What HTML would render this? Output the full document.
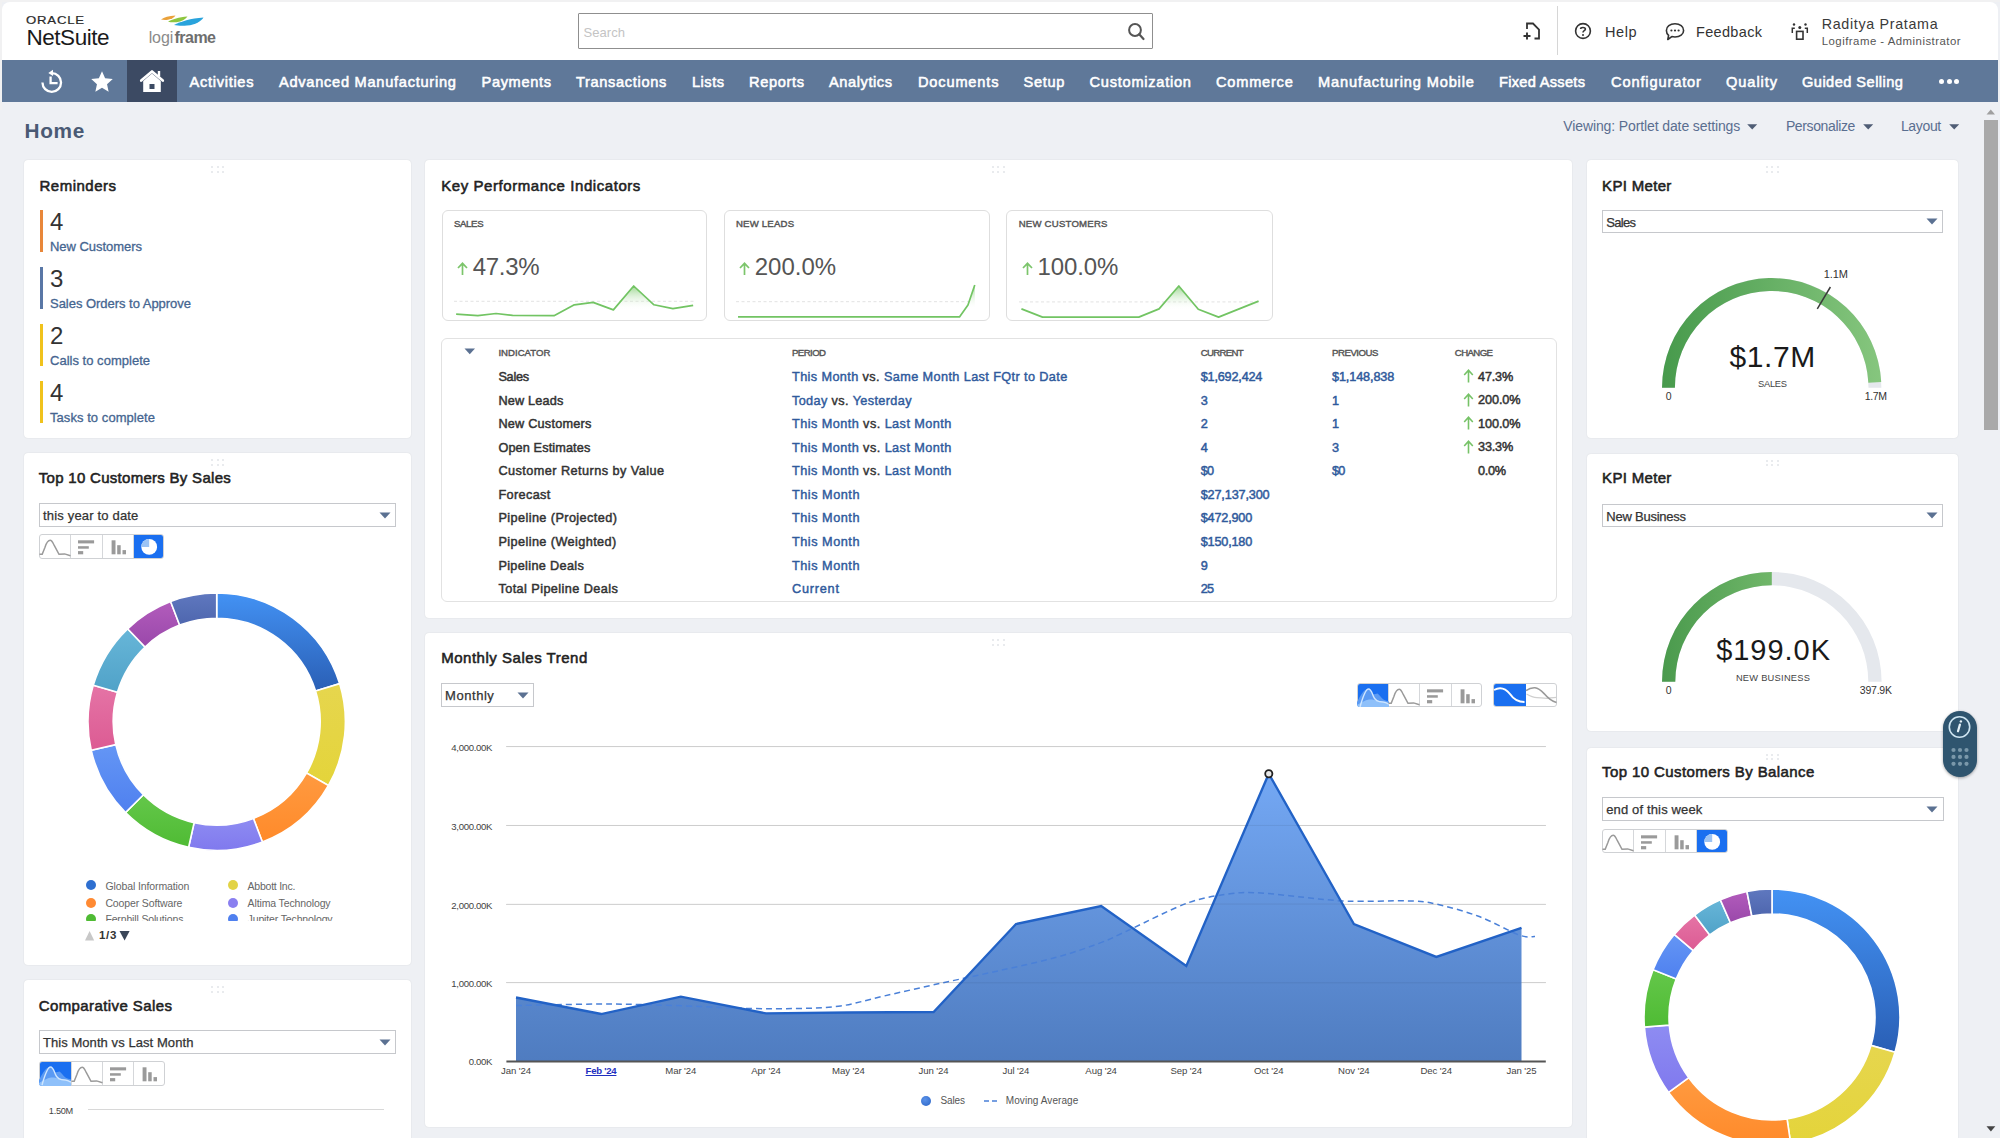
<!DOCTYPE html>
<html><head><meta charset="utf-8"><title>NetSuite Home</title>
<style>
*{margin:0;padding:0;box-sizing:border-box}
html,body{width:2000px;height:1138px;overflow:hidden;background:#eef0f4;font-family:"Liberation Sans",sans-serif;color:#222}
.abs{position:absolute}
.t{position:absolute;white-space:nowrap}

</style></head>
<body>
<div class="abs" style="left:0;top:0;width:2000px;height:1138px;background:#eef0f4;overflow:hidden">
<div class="abs" style="left:0;top:0;width:2000px;height:2px;background:#f1f1f2"></div><div class="abs" style="left:0;top:0;width:2px;height:110px;background:#f1f1f2"></div>
<div class="abs" style="left:2px;top:2px;width:1996px;height:58px;background:#fff;border-radius:8px 8px 0 0"></div>
<div class="t" style="left:26px;top:14.6px;font-size:10.8px;line-height:11px;color:#2a2a2a;transform:scaleX(1.22);transform-origin:0 0;letter-spacing:0.65px;-webkit-text-stroke:0.2px #2a2a2a">ORACLE</div>
<div class="t" style="left:26.50px;top:27.01px;font-size:22.5px;line-height:22.5px;color:#1a1a1a;letter-spacing:-0.470px;">NetSuite</div>
<div class="t" style="left:148.70px;top:29.71px;font-size:16px;line-height:16px;color:#8a8a8a;letter-spacing:-0.127px;">logi</div>
<div class="t" style="left:174.50px;top:29.71px;font-size:16px;line-height:16px;color:#6e6e6e;font-weight:bold;letter-spacing:-0.525px;">frame</div>
<svg class="abs" style="left:158px;top:12px" width="50" height="18" viewBox="0 0 50 18">
<path d="M3 7.6 C6 5.5,11 4,17.5 3.6 C16 5.6,13.5 7.3,10 7.8 C7.5 8.1,5 8,3 7.6Z" fill="#eaa13a"/>
<path d="M10 9.8 C14 7.4,21 5.2,29.5 4.6 C27.5 7.6,23.5 9.6,18.5 10.2 C15.5 10.5,12.5 10.3,10 9.8Z" fill="#8dc63f"/>
<path d="M16 13 C22 9.6,33 6.2,45.5 5.4 C43 9.2,37.5 12.6,29 13.6 C24 14.1,19.5 13.8,16 13Z" fill="#29a3dc"/>
</svg>
<div class="abs" style="left:578px;top:13px;width:575px;height:36px;border:1.6px solid #8f8f8f;border-radius:1px;background:#fff"></div>
<div class="t" style="left:583.50px;top:25.70px;font-size:13px;line-height:13px;color:#c4c4c4;letter-spacing:0.058px;">Search</div>
<svg class="abs" style="left:1125px;top:20px" width="24" height="24" viewBox="0 0 24 24">
<circle cx="10" cy="10" r="5.9" fill="none" stroke="#555" stroke-width="2"/>
<line x1="14.2" y1="14.2" x2="18.5" y2="19" stroke="#555" stroke-width="2.2" stroke-linecap="round"/></svg>
<svg class="abs" style="left:1520px;top:20px" width="24" height="24" viewBox="0 0 24 24">
<path d="M7 9 V3.5 H13 L19 9.5 V18.5 H14.5" fill="none" stroke="#333" stroke-width="1.8"/>
<path d="M3.5 16 H10.5 M7 12.5 V19.5" stroke="#333" stroke-width="1.9"/></svg>
<div class="abs" style="left:1557px;top:6px;width:1px;height:49px;background:#d6d6d6"></div>
<svg class="abs" style="left:1573px;top:21px" width="20" height="20" viewBox="0 0 20 20">
<circle cx="10" cy="10" r="7.4" fill="none" stroke="#333" stroke-width="1.6"/>
<path d="M7.6 8 C7.6 5.9,12.4 5.9,12.4 8 C12.4 9.6,10 9.6,10 11.4" fill="none" stroke="#333" stroke-width="1.6"/>
<circle cx="10" cy="13.9" r="1" fill="#333"/></svg>
<div class="t" style="left:1605.00px;top:25.46px;font-size:14.5px;line-height:14.5px;color:#333;letter-spacing:0.568px;">Help</div>
<svg class="abs" style="left:1664px;top:21px" width="22" height="22" viewBox="0 0 22 22">
<path d="M11 2.8 C16 2.8,19.6 5.6,19.6 9.4 C19.6 13.2,16 16,11 16 C9.8 16,8.8 15.9,7.8 15.6 L3.8 18.5 L4.6 14.3 C3.1 13,2.4 11.3,2.4 9.4 C2.4 5.6,6 2.8,11 2.8Z" fill="none" stroke="#333" stroke-width="1.6" stroke-linejoin="round"/>
<circle cx="7.4" cy="9.5" r="1.1" fill="#333"/><circle cx="11" cy="9.5" r="1.1" fill="#333"/><circle cx="14.6" cy="9.5" r="1.1" fill="#333"/></svg>
<div class="t" style="left:1696.00px;top:25.46px;font-size:14.5px;line-height:14.5px;color:#333;letter-spacing:0.325px;">Feedback</div>
<svg class="abs" style="left:1788px;top:20px" width="24" height="24" viewBox="0 0 24 24">
<circle cx="6" cy="4.5" r="1.2" fill="#333"/><circle cx="17.5" cy="4.5" r="1.2" fill="#333"/><circle cx="11.8" cy="7.5" r="1.5" fill="#333"/>
<path d="M4.3 13 V8.2 H6.8 M19.3 13 V8.2 H16.8" fill="none" stroke="#333" stroke-width="1.5"/>
<rect x="8.6" y="11.4" width="6.4" height="7.8" fill="none" stroke="#333" stroke-width="1.6"/></svg>
<div class="t" style="left:1821.70px;top:17.12px;font-size:14.3px;line-height:14.3px;color:#3a3a3a;letter-spacing:0.676px;">Raditya Pratama</div>
<div class="t" style="left:1821.70px;top:36.23px;font-size:11.4px;line-height:11.4px;color:#555;letter-spacing:0.486px;">Logiframe - Administrator</div>
<div class="abs" style="left:2px;top:60px;width:1996px;height:42px;background:#5f7899"></div>
<div class="abs" style="left:127px;top:60px;width:50px;height:42px;background:#3c4a63"></div>
<div class="t" style="left:189.60px;top:75.37px;font-size:14.6px;line-height:14.6px;color:#ffffff;-webkit-text-stroke:0.55px #ffffff;letter-spacing:0.700px;">Activities</div>
<div class="t" style="left:279.00px;top:75.37px;font-size:14.6px;line-height:14.6px;color:#ffffff;-webkit-text-stroke:0.55px #ffffff;letter-spacing:0.736px;">Advanced Manufacturing</div>
<div class="t" style="left:481.50px;top:75.37px;font-size:14.6px;line-height:14.6px;color:#ffffff;-webkit-text-stroke:0.55px #ffffff;letter-spacing:0.658px;">Payments</div>
<div class="t" style="left:576.00px;top:75.37px;font-size:14.6px;line-height:14.6px;color:#ffffff;-webkit-text-stroke:0.55px #ffffff;letter-spacing:0.657px;">Transactions</div>
<div class="t" style="left:692.00px;top:75.37px;font-size:14.6px;line-height:14.6px;color:#ffffff;-webkit-text-stroke:0.55px #ffffff;letter-spacing:0.499px;">Lists</div>
<div class="t" style="left:749.00px;top:75.37px;font-size:14.6px;line-height:14.6px;color:#ffffff;-webkit-text-stroke:0.55px #ffffff;letter-spacing:0.650px;">Reports</div>
<div class="t" style="left:829.00px;top:75.37px;font-size:14.6px;line-height:14.6px;color:#ffffff;-webkit-text-stroke:0.55px #ffffff;letter-spacing:0.575px;">Analytics</div>
<div class="t" style="left:918.00px;top:75.37px;font-size:14.6px;line-height:14.6px;color:#ffffff;-webkit-text-stroke:0.55px #ffffff;letter-spacing:0.828px;">Documents</div>
<div class="t" style="left:1023.50px;top:75.37px;font-size:14.6px;line-height:14.6px;color:#ffffff;-webkit-text-stroke:0.55px #ffffff;letter-spacing:0.705px;">Setup</div>
<div class="t" style="left:1089.50px;top:75.37px;font-size:14.6px;line-height:14.6px;color:#ffffff;-webkit-text-stroke:0.55px #ffffff;letter-spacing:0.751px;">Customization</div>
<div class="t" style="left:1216.00px;top:75.37px;font-size:14.6px;line-height:14.6px;color:#ffffff;-webkit-text-stroke:0.55px #ffffff;letter-spacing:0.772px;">Commerce</div>
<div class="t" style="left:1318.00px;top:75.37px;font-size:14.6px;line-height:14.6px;color:#ffffff;-webkit-text-stroke:0.55px #ffffff;letter-spacing:0.864px;">Manufacturing Mobile</div>
<div class="t" style="left:1499.00px;top:75.37px;font-size:14.6px;line-height:14.6px;color:#ffffff;-webkit-text-stroke:0.55px #ffffff;letter-spacing:0.293px;">Fixed Assets</div>
<div class="t" style="left:1611.00px;top:75.37px;font-size:14.6px;line-height:14.6px;color:#ffffff;-webkit-text-stroke:0.55px #ffffff;letter-spacing:0.875px;">Configurator</div>
<div class="t" style="left:1726.00px;top:75.37px;font-size:14.6px;line-height:14.6px;color:#ffffff;-webkit-text-stroke:0.55px #ffffff;letter-spacing:0.932px;">Quality</div>
<div class="t" style="left:1802.00px;top:75.37px;font-size:14.6px;line-height:14.6px;color:#ffffff;-webkit-text-stroke:0.55px #ffffff;letter-spacing:0.464px;">Guided Selling</div>
<div class="abs" style="left:1939.0px;top:78.5px;width:5px;height:5px;border-radius:50%;background:#fff"></div>
<div class="abs" style="left:1946.5px;top:78.5px;width:5px;height:5px;border-radius:50%;background:#fff"></div>
<div class="abs" style="left:1954.0px;top:78.5px;width:5px;height:5px;border-radius:50%;background:#fff"></div>
<svg class="abs" style="left:38px;top:68px" width="28" height="28" viewBox="0 0 28 28">
<path d="M13.75 5.2 A9.3 9.3 0 1 1 4.45 14.5" fill="none" stroke="#fff" stroke-width="2.3"/>
<path d="M10.3 4.9 L15 1.8 L15 8Z" fill="#fff"/>
<path d="M12.6 8.5 V15.2 H19.6" fill="none" stroke="#fff" stroke-width="2.3"/></svg>
<svg class="abs" style="left:90px;top:70px" width="24" height="23" viewBox="0 0 24 23">
<path d="M12.00 1.20 L15.12 8.21 L22.75 9.01 L17.04 14.14 L18.64 21.64 L12.00 17.80 L5.36 21.64 L6.96 14.14 L1.25 9.01 L8.88 8.21Z" fill="#fff"/></svg>
<svg class="abs" style="left:138px;top:69px" width="28" height="25" viewBox="0 0 28 25">
<path d="M3.2 11.6 L14 2.4 L24.8 11.6" fill="none" stroke="#fff" stroke-width="2.6" stroke-linecap="round" stroke-linejoin="round"/>
<rect x="19.8" y="2" width="2.4" height="5.5" fill="#fff"/>
<path d="M5.2 12 L14 4.6 L22.8 12 V23 H5.2Z" fill="#fff"/>
<rect x="11.5" y="15" width="5" height="5" fill="#3c4a63"/></svg>
<div class="t" style="left:24.60px;top:121.13px;font-size:20.8px;line-height:20.8px;color:#4a5a74;font-weight:bold;letter-spacing:0.625px;">Home</div>
<div class="t" style="left:1563.30px;top:119.37px;font-size:14px;line-height:14px;color:#5a6e90;letter-spacing:-0.114px;">Viewing: Portlet date settings</div>
<svg class="abs" style="left:1747.4px;top:124.4px" width="11" height="6" viewBox="0 0 11 6"><path d="M0.2 0.2 H10.2 L5.2 5.4Z" fill="#4f5d75"/></svg>
<div class="t" style="left:1785.90px;top:119.37px;font-size:14px;line-height:14px;color:#5a6e90;letter-spacing:-0.375px;">Personalize</div>
<svg class="abs" style="left:1862.8px;top:124.4px" width="11" height="6" viewBox="0 0 11 6"><path d="M0.2 0.2 H10.2 L5.2 5.4Z" fill="#4f5d75"/></svg>
<div class="t" style="left:1900.90px;top:119.37px;font-size:14px;line-height:14px;color:#5a6e90;letter-spacing:-0.334px;">Layout</div>
<svg class="abs" style="left:1949.3px;top:124.4px" width="11" height="6" viewBox="0 0 11 6"><path d="M0.2 0.2 H10.2 L5.2 5.4Z" fill="#4f5d75"/></svg>
<div class="abs" style="left:24px;top:160px;width:387px;height:278px;background:#fff;border-radius:4px;box-shadow:0 0 1.5px rgba(0,0,0,0.12)"></div><div class="abs" style="left:211.0px;top:166.0px;width:2px;height:2px;background:#e9ebee"></div><div class="abs" style="left:216.5px;top:166.0px;width:2px;height:2px;background:#e9ebee"></div><div class="abs" style="left:222.0px;top:166.0px;width:2px;height:2px;background:#e9ebee"></div><div class="abs" style="left:211.0px;top:170.5px;width:2px;height:2px;background:#e9ebee"></div><div class="abs" style="left:216.5px;top:170.5px;width:2px;height:2px;background:#e9ebee"></div><div class="abs" style="left:222.0px;top:170.5px;width:2px;height:2px;background:#e9ebee"></div>
<div class="t" style="left:39.50px;top:177.84px;font-size:15px;line-height:15px;color:#222;-webkit-text-stroke:0.55px #222;letter-spacing:0.497px;">Reminders</div>
<div class="abs" style="left:39.5px;top:210px;width:3.2px;height:42px;background:#e8873a"></div>
<div class="t" style="left:50.00px;top:210.27px;font-size:24px;line-height:24px;color:#333;">4</div>
<div class="t" style="left:50.00px;top:240.40px;font-size:13px;line-height:13px;color:#456590;letter-spacing:-0.041px;-webkit-text-stroke:0.3px #456590;">New Customers</div>
<div class="abs" style="left:39.5px;top:267px;width:3.2px;height:42px;background:#5977a6"></div>
<div class="t" style="left:50.00px;top:267.27px;font-size:24px;line-height:24px;color:#333;">3</div>
<div class="t" style="left:50.00px;top:297.40px;font-size:13px;line-height:13px;color:#456590;letter-spacing:-0.029px;-webkit-text-stroke:0.3px #456590;">Sales Orders to Approve</div>
<div class="abs" style="left:39.5px;top:324px;width:3.2px;height:42px;background:#f0c21c"></div>
<div class="t" style="left:50.00px;top:324.27px;font-size:24px;line-height:24px;color:#333;">2</div>
<div class="t" style="left:50.00px;top:354.40px;font-size:13px;line-height:13px;color:#456590;letter-spacing:0.018px;-webkit-text-stroke:0.3px #456590;">Calls to complete</div>
<div class="abs" style="left:39.5px;top:381px;width:3.2px;height:42px;background:#f0c21c"></div>
<div class="t" style="left:50.00px;top:381.27px;font-size:24px;line-height:24px;color:#333;">4</div>
<div class="t" style="left:50.00px;top:411.40px;font-size:13px;line-height:13px;color:#456590;letter-spacing:0.058px;-webkit-text-stroke:0.3px #456590;">Tasks to complete</div>
<div class="abs" style="left:24px;top:453px;width:387px;height:512px;background:#fff;border-radius:4px;box-shadow:0 0 1.5px rgba(0,0,0,0.12)"></div><div class="abs" style="left:211.0px;top:459.0px;width:2px;height:2px;background:#e9ebee"></div><div class="abs" style="left:216.5px;top:459.0px;width:2px;height:2px;background:#e9ebee"></div><div class="abs" style="left:222.0px;top:459.0px;width:2px;height:2px;background:#e9ebee"></div><div class="abs" style="left:211.0px;top:463.5px;width:2px;height:2px;background:#e9ebee"></div><div class="abs" style="left:216.5px;top:463.5px;width:2px;height:2px;background:#e9ebee"></div><div class="abs" style="left:222.0px;top:463.5px;width:2px;height:2px;background:#e9ebee"></div>
<div class="t" style="left:38.80px;top:470.44px;font-size:15px;line-height:15px;color:#222;-webkit-text-stroke:0.55px #222;letter-spacing:0.288px;">Top 10 Customers By Sales</div>
<div class="abs" style="left:38.8px;top:503px;width:357.2px;height:24px;border:1px solid #c6c8cc;background:#fff"></div><div class="t" style="left:43.00px;top:509.20px;font-size:13px;line-height:13px;color:#333;letter-spacing:0.175px;-webkit-text-stroke:0.25px #333;">this year to date</div><svg class="abs" style="left:378.5px;top:511.7px" width="12" height="7" viewBox="0 0 12 7"><path d="M0.5 0.5 H11.5 L6 6.5Z" fill="#5b7192"/></svg>
<div class="abs" style="left:39.2px;top:534.2px;width:124.8px;height:25px;border:1px solid #cfd1d4;border-radius:3px;background:#fff;overflow:hidden"><div class="abs" style="left:30.2px;top:0;width:1px;height:23px;background:#d5d7da"></div><div class="abs" style="left:61.4px;top:0;width:1px;height:23px;background:#d5d7da"></div><div class="abs" style="left:92.6px;top:-1px;width:32.2px;height:25px;background:#1a6ff0"></div><div class="abs" style="left:92.6px;top:0;width:1px;height:23px;background:#d5d7da"></div></div><div class="abs" style="left:39.2px;top:534.2px;width:124.8px;height:25px;overflow:hidden;border-radius:3px"><svg class="abs" style="left:0.0px;top:0px" width="32" height="25" viewBox="0 0 32 25"><path d="M0.5 20.3 H3.2 L6 13.3 C8 7,9.5 6.3,11.2 6.3 C13 6.3,14 9,15.1 11.2 L20 20.3 L25.6 19.9 L31.5 21.7" fill="none" stroke="#9a9a9a" stroke-width="1.5"/></svg><svg class="abs" style="left:31.2px;top:0px" width="32" height="25" viewBox="0 0 32 25"><rect x="8" y="6.3" width="16.1" height="3.1" fill="#9a9a9a"/><rect x="8" y="12.2" width="10.8" height="2.5" fill="#9a9a9a"/><rect x="8" y="17.1" width="5.2" height="3.2" fill="#9a9a9a"/></svg><svg class="abs" style="left:62.4px;top:0px" width="32" height="25" viewBox="0 0 32 25"><rect x="9.6" y="6.3" width="3.9" height="14" fill="#9a9a9a"/><rect x="15.2" y="11.2" width="3.5" height="9.1" fill="#9a9a9a"/><rect x="20.5" y="16.1" width="3.5" height="4.2" fill="#9a9a9a"/></svg><svg class="abs" style="left:93.6px;top:0px" width="32" height="25" viewBox="0 0 32 25"><circle cx="16.2" cy="12.9" r="7.9" fill="#fff"/><path d="M16.2 12.9 H8.3 A7.9 7.9 0 0 1 16.2 5Z" fill="#9cc3f4"/></svg></div>
<svg class="abs" style="left:85.80px;top:591.30px" width="261.4" height="261.4" viewBox="0 0 261.4 261.4"><defs><linearGradient id="g216_722_0" x1="0" y1="0" x2="0" y2="1"><stop offset="0" stop-color="#4392f4"/><stop offset="1" stop-color="#2a5fb5"/></linearGradient><linearGradient id="g216_722_1" x1="0" y1="0" x2="0" y2="1"><stop offset="0" stop-color="#e6d64e"/><stop offset="1" stop-color="#e4d43a"/></linearGradient><linearGradient id="g216_722_2" x1="0" y1="0" x2="0" y2="1"><stop offset="0" stop-color="#ff9a40"/><stop offset="1" stop-color="#ff8a2a"/></linearGradient><linearGradient id="g216_722_3" x1="0" y1="0" x2="0" y2="1"><stop offset="0" stop-color="#8e8cf2"/><stop offset="1" stop-color="#8079ee"/></linearGradient><linearGradient id="g216_722_4" x1="0" y1="0" x2="0" y2="1"><stop offset="0" stop-color="#64c74a"/><stop offset="1" stop-color="#4fbb34"/></linearGradient><linearGradient id="g216_722_5" x1="0" y1="0" x2="0" y2="1"><stop offset="0" stop-color="#6496f5"/><stop offset="1" stop-color="#4f80ef"/></linearGradient><linearGradient id="g216_722_6" x1="0" y1="0" x2="0" y2="1"><stop offset="0" stop-color="#e574a6"/><stop offset="1" stop-color="#dc5b93"/></linearGradient><linearGradient id="g216_722_7" x1="0" y1="0" x2="0" y2="1"><stop offset="0" stop-color="#67b6d8"/><stop offset="1" stop-color="#50a2c8"/></linearGradient><linearGradient id="g216_722_8" x1="0" y1="0" x2="0" y2="1"><stop offset="0" stop-color="#b25cbc"/><stop offset="1" stop-color="#9a48aa"/></linearGradient><linearGradient id="g216_722_9" x1="0" y1="0" x2="0" y2="1"><stop offset="0" stop-color="#5f78bf"/><stop offset="1" stop-color="#4e66ae"/></linearGradient></defs><path d="M130.70 2.00 A128.7 128.7 0 0 1 253.64 92.64 L229.57 100.09 A103.5 103.5 0 0 0 130.70 27.20Z" fill="url(#g216_722_0)" stroke="#fff" stroke-width="1.6" stroke-linejoin="miter"/><path d="M253.64 92.64 A128.7 128.7 0 0 1 242.49 194.47 L220.60 181.98 A103.5 103.5 0 0 0 229.57 100.09Z" fill="url(#g216_722_1)" stroke="#fff" stroke-width="1.6" stroke-linejoin="miter"/><path d="M242.49 194.47 A128.7 128.7 0 0 1 176.40 251.01 L167.45 227.45 A103.5 103.5 0 0 0 220.60 181.98Z" fill="url(#g216_722_2)" stroke="#fff" stroke-width="1.6" stroke-linejoin="miter"/><path d="M176.40 251.01 A128.7 128.7 0 0 1 102.62 256.30 L108.12 231.71 A103.5 103.5 0 0 0 167.45 227.45Z" fill="url(#g216_722_3)" stroke="#fff" stroke-width="1.6" stroke-linejoin="miter"/><path d="M102.62 256.30 A128.7 128.7 0 0 1 39.54 221.55 L57.39 203.76 A103.5 103.5 0 0 0 108.12 231.71Z" fill="url(#g216_722_4)" stroke="#fff" stroke-width="1.6" stroke-linejoin="miter"/><path d="M39.54 221.55 A128.7 128.7 0 0 1 5.20 159.21 L29.77 153.63 A103.5 103.5 0 0 0 57.39 203.76Z" fill="url(#g216_722_5)" stroke="#fff" stroke-width="1.6" stroke-linejoin="miter"/><path d="M5.20 159.21 A128.7 128.7 0 0 1 7.30 94.15 L31.46 101.30 A103.5 103.5 0 0 0 29.77 153.63Z" fill="url(#g216_722_6)" stroke="#fff" stroke-width="1.6" stroke-linejoin="miter"/><path d="M7.30 94.15 A128.7 128.7 0 0 1 41.62 37.81 L59.06 56.00 A103.5 103.5 0 0 0 31.46 101.30Z" fill="url(#g216_722_7)" stroke="#fff" stroke-width="1.6" stroke-linejoin="miter"/><path d="M41.62 37.81 A128.7 128.7 0 0 1 84.58 10.55 L93.61 34.07 A103.5 103.5 0 0 0 59.06 56.00Z" fill="url(#g216_722_8)" stroke="#fff" stroke-width="1.6" stroke-linejoin="miter"/><path d="M84.58 10.55 A128.7 128.7 0 0 1 130.70 2.00 L130.70 27.20 A103.5 103.5 0 0 0 93.61 34.07Z" fill="url(#g216_722_9)" stroke="#fff" stroke-width="1.6" stroke-linejoin="miter"/></svg>
<div class="abs" style="left:70px;top:875px;width:300px;height:46px;overflow:hidden">
<div class="abs" style="left:16.2px;top:5.4px;width:10px;height:10px;border-radius:50%;background:#2e6fd0"></div>
<div class="t" style="left:35.40px;top:5.88px;font-size:10.5px;line-height:10.5px;color:#666;letter-spacing:-0.105px;">Global Information</div>
<div class="abs" style="left:158.4px;top:5.4px;width:10px;height:10px;border-radius:50%;background:#e2d346"></div>
<div class="t" style="left:177.60px;top:5.88px;font-size:10.5px;line-height:10.5px;color:#666;letter-spacing:-0.239px;">Abbott Inc.</div>
<div class="abs" style="left:16.2px;top:22.7px;width:10px;height:10px;border-radius:50%;background:#ff8a33"></div>
<div class="t" style="left:35.40px;top:23.18px;font-size:10.5px;line-height:10.5px;color:#666;letter-spacing:-0.129px;">Cooper Software</div>
<div class="abs" style="left:158.4px;top:22.7px;width:10px;height:10px;border-radius:50%;background:#8a7ff0"></div>
<div class="t" style="left:177.60px;top:23.18px;font-size:10.5px;line-height:10.5px;color:#666;letter-spacing:-0.125px;">Altima Technology</div>
<div class="abs" style="left:16.2px;top:38.8px;width:10px;height:10px;border-radius:50%;background:#4fbb34"></div>
<div class="t" style="left:35.40px;top:39.28px;font-size:10.5px;line-height:10.5px;color:#666;letter-spacing:-0.149px;">Fernhill Solutions</div>
<div class="abs" style="left:158.4px;top:38.8px;width:10px;height:10px;border-radius:50%;background:#4f80ef"></div>
<div class="t" style="left:177.60px;top:39.28px;font-size:10.5px;line-height:10.5px;color:#666;letter-spacing:-0.139px;">Jupiter Technology</div>
</div>
<svg class="abs" style="left:84px;top:930px" width="48" height="12" viewBox="0 0 48 12"><path d="M1 10.5 L5.6 1 L10.2 10.5Z" fill="#c8c8c8"/><path d="M35.5 1 H45.6 L40.6 10.5Z" fill="#3a4658"/></svg>
<div class="t" style="left:99.00px;top:930.45px;font-size:11.5px;line-height:11.5px;color:#333;font-weight:bold;letter-spacing:0.707px;">1/3</div>
<div class="abs" style="left:24px;top:980px;width:387px;height:180px;background:#fff;border-radius:4px;box-shadow:0 0 1.5px rgba(0,0,0,0.12)"></div><div class="abs" style="left:211.0px;top:986.0px;width:2px;height:2px;background:#e9ebee"></div><div class="abs" style="left:216.5px;top:986.0px;width:2px;height:2px;background:#e9ebee"></div><div class="abs" style="left:222.0px;top:986.0px;width:2px;height:2px;background:#e9ebee"></div><div class="abs" style="left:211.0px;top:990.5px;width:2px;height:2px;background:#e9ebee"></div><div class="abs" style="left:216.5px;top:990.5px;width:2px;height:2px;background:#e9ebee"></div><div class="abs" style="left:222.0px;top:990.5px;width:2px;height:2px;background:#e9ebee"></div>
<div class="t" style="left:38.70px;top:997.74px;font-size:15px;line-height:15px;color:#222;-webkit-text-stroke:0.55px #222;letter-spacing:0.409px;">Comparative Sales</div>
<div class="abs" style="left:38.7px;top:1030px;width:357.3px;height:24px;border:1px solid #c6c8cc;background:#fff"></div><div class="t" style="left:42.90px;top:1036.20px;font-size:13px;line-height:13px;color:#333;letter-spacing:0.072px;-webkit-text-stroke:0.25px #333;">This Month vs Last Month</div><svg class="abs" style="left:378.5px;top:1038.7px" width="12" height="7" viewBox="0 0 12 7"><path d="M0.5 0.5 H11.5 L6 6.5Z" fill="#5b7192"/></svg>
<div class="abs" style="left:39.3px;top:1060.7px;width:125.6px;height:25px;border:1px solid #cfd1d4;border-radius:3px;background:#fff;overflow:hidden"><div class="abs" style="left:-1.0px;top:-1px;width:32.4px;height:25px;background:#1a6ff0"></div><div class="abs" style="left:30.4px;top:0;width:1px;height:23px;background:#d5d7da"></div><div class="abs" style="left:61.8px;top:0;width:1px;height:23px;background:#d5d7da"></div><div class="abs" style="left:93.2px;top:0;width:1px;height:23px;background:#d5d7da"></div></div><div class="abs" style="left:39.3px;top:1060.7px;width:125.6px;height:25px;overflow:hidden;border-radius:3px"><svg class="abs" style="left:0.0px;top:0px" width="32" height="25" viewBox="0 0 32 25"><path d="M0 25 V19 C3 14,6 6,11.5 6 C14 6,15 10,16.5 11.5 L20.5 10.5 C22.5 11.5,24 15,26.5 16.5 C28.5 17.5,30 18,32 18.5 V25Z" fill="#5a9af3"/><path d="M0 25 V22 C4 20,8 17,12 16.5 C17 16,24 19,32 21 V25Z" fill="#8ec0fa"/><path d="M3 24 C5 17,8 6,11.5 6 C14 6,15 10,16.5 13.5 C18 18,22 19,26 19 C28 19,30 20,32 21" fill="none" stroke="#cfe6ff" stroke-width="1.4"/></svg><svg class="abs" style="left:31.4px;top:0px" width="32" height="25" viewBox="0 0 32 25"><path d="M0.5 20.3 H3.2 L6 13.3 C8 7,9.5 6.3,11.2 6.3 C13 6.3,14 9,15.1 11.2 L20 20.3 L25.6 19.9 L31.5 21.7" fill="none" stroke="#9a9a9a" stroke-width="1.5"/></svg><svg class="abs" style="left:62.8px;top:0px" width="32" height="25" viewBox="0 0 32 25"><rect x="8" y="6.3" width="16.1" height="3.1" fill="#9a9a9a"/><rect x="8" y="12.2" width="10.8" height="2.5" fill="#9a9a9a"/><rect x="8" y="17.1" width="5.2" height="3.2" fill="#9a9a9a"/></svg><svg class="abs" style="left:94.2px;top:0px" width="32" height="25" viewBox="0 0 32 25"><rect x="9.6" y="6.3" width="3.9" height="14" fill="#9a9a9a"/><rect x="15.2" y="11.2" width="3.5" height="9.1" fill="#9a9a9a"/><rect x="20.5" y="16.1" width="3.5" height="4.2" fill="#9a9a9a"/></svg></div>
<div class="t" style="left:48.80px;top:1107.36px;font-size:9.2px;line-height:9.2px;color:#444;letter-spacing:-0.269px;">1.50M</div>
<div class="abs" style="left:88px;top:1109px;width:296px;height:1px;background:#d8d8d8"></div>
<div class="abs" style="left:425px;top:160px;width:1146.5px;height:458px;background:#fff;border-radius:4px;box-shadow:0 0 1.5px rgba(0,0,0,0.12)"></div><div class="abs" style="left:991.8px;top:166.0px;width:2px;height:2px;background:#e9ebee"></div><div class="abs" style="left:997.2px;top:166.0px;width:2px;height:2px;background:#e9ebee"></div><div class="abs" style="left:1002.8px;top:166.0px;width:2px;height:2px;background:#e9ebee"></div><div class="abs" style="left:991.8px;top:170.5px;width:2px;height:2px;background:#e9ebee"></div><div class="abs" style="left:997.2px;top:170.5px;width:2px;height:2px;background:#e9ebee"></div><div class="abs" style="left:1002.8px;top:170.5px;width:2px;height:2px;background:#e9ebee"></div>
<div class="t" style="left:441.20px;top:177.94px;font-size:15px;line-height:15px;color:#222;-webkit-text-stroke:0.55px #222;letter-spacing:0.564px;">Key Performance Indicators</div>
<div class="abs" style="left:441.6px;top:210px;width:265.4px;height:111px;border:1px solid #dedede;border-radius:6px;background:#fff"></div>
<div class="t" style="left:453.90px;top:219.33px;font-size:9.6px;line-height:9.6px;color:#555;-webkit-text-stroke:0.42px #555;letter-spacing:-0.315px;">SALES</div>
<svg class="abs" style="left:457.40000000000003px;top:261.5px" width="12" height="14" viewBox="0 0 12 14"><path d="M5.5 13 V1.5 M1 6 L5.5 1.3 L10 6" fill="none" stroke="#7cc56b" stroke-width="1.7"/></svg>
<div class="t" style="left:472.80px;top:255.47px;font-size:24px;line-height:24px;color:#555;letter-spacing:-0.335px;">47.3%</div>
<svg class="abs" style="left:451.0px;top:283.3px" width="246.0" height="36.7" viewBox="0 0 246.0 36.7"><defs><linearGradient id="sp0" x1="0" y1="3.0" x2="0" y2="27.0" gradientUnits="userSpaceOnUse"><stop offset="0" stop-color="#7cc96c" stop-opacity="0.75"/><stop offset="1" stop-color="#ffffff" stop-opacity="0"/></linearGradient></defs><line x1="3.0" y1="18.3" x2="243.0" y2="18.3" stroke="#e2e2e2" stroke-width="1" stroke-dasharray="3 2.5"/><path d="M5.1 31.2 L26.8 32.7 L45.0 30.5 L61.6 32.4 L103.0 32.7 L123.3 21.8 L142.1 19.4 L162.4 26.9 L182.7 3.0 L203.0 21.8 L221.9 25.7 L242.2 22.3 L242.2 36.7 L5.1 36.7Z" fill="url(#sp0)"/><path d="M5.1 31.2 L26.8 32.7 L45.0 30.5 L61.6 32.4 L103.0 32.7 L123.3 21.8 L142.1 19.4 L162.4 26.9 L182.7 3.0 L203.0 21.8 L221.9 25.7 L242.2 22.3" fill="none" stroke="#72c463" stroke-width="1.7" stroke-linejoin="round"/></svg>
<div class="abs" style="left:723.6px;top:210px;width:266.4px;height:111px;border:1px solid #dedede;border-radius:6px;background:#fff"></div>
<div class="t" style="left:735.90px;top:219.33px;font-size:9.6px;line-height:9.6px;color:#555;-webkit-text-stroke:0.42px #555;letter-spacing:0.220px;">NEW LEADS</div>
<svg class="abs" style="left:739.4px;top:261.5px" width="12" height="14" viewBox="0 0 12 14"><path d="M5.5 13 V1.5 M1 6 L5.5 1.3 L10 6" fill="none" stroke="#7cc56b" stroke-width="1.7"/></svg>
<div class="t" style="left:754.80px;top:255.47px;font-size:24px;line-height:24px;color:#555;letter-spacing:-0.032px;">200.0%</div>
<svg class="abs" style="left:733.0px;top:281.9px" width="244.8" height="38.9" viewBox="0 0 244.8 38.9"><defs><linearGradient id="sp1" x1="0" y1="3.0" x2="0" y2="27.0" gradientUnits="userSpaceOnUse"><stop offset="0" stop-color="#7cc96c" stop-opacity="0.75"/><stop offset="1" stop-color="#ffffff" stop-opacity="0"/></linearGradient></defs><line x1="3.0" y1="19.7" x2="239.5" y2="19.7" stroke="#e2e2e2" stroke-width="1" stroke-dasharray="3 2.5"/><path d="M5.0 34.9 L226.5 34.9 L235.0 23.1 L241.8 3.0 L241.8 38.9 L5.0 38.9Z" fill="url(#sp1)"/><path d="M5.0 34.9 L226.5 34.9 L235.0 23.1 L241.8 3.0" fill="none" stroke="#72c463" stroke-width="1.7" stroke-linejoin="round"/></svg>
<div class="abs" style="left:1006.4px;top:210px;width:266.8px;height:111px;border:1px solid #dedede;border-radius:6px;background:#fff"></div>
<div class="t" style="left:1018.70px;top:219.33px;font-size:9.6px;line-height:9.6px;color:#555;-webkit-text-stroke:0.42px #555;letter-spacing:0.216px;">NEW CUSTOMERS</div>
<svg class="abs" style="left:1022.1999999999999px;top:261.5px" width="12" height="14" viewBox="0 0 12 14"><path d="M5.5 13 V1.5 M1 6 L5.5 1.3 L10 6" fill="none" stroke="#7cc56b" stroke-width="1.7"/></svg>
<div class="t" style="left:1037.60px;top:255.47px;font-size:24px;line-height:24px;color:#555;letter-spacing:-0.152px;">100.0%</div>
<svg class="abs" style="left:1016.4px;top:282.7px" width="245.6" height="38.1" viewBox="0 0 245.6 38.1"><defs><linearGradient id="sp2" x1="0" y1="3.0" x2="0" y2="27.0" gradientUnits="userSpaceOnUse"><stop offset="0" stop-color="#7cc96c" stop-opacity="0.75"/><stop offset="1" stop-color="#ffffff" stop-opacity="0"/></linearGradient></defs><line x1="3.0" y1="18.9" x2="242.6" y2="18.9" stroke="#e2e2e2" stroke-width="1" stroke-dasharray="3 2.5"/><path d="M5.4 25.9 L26.5 34.1 L122.8 34.1 L143.1 25.9 L162.8 3.0 L182.3 26.2 L202.6 34.1 L242.6 18.1 L242.6 38.1 L5.4 38.1Z" fill="url(#sp2)"/><path d="M5.4 25.9 L26.5 34.1 L122.8 34.1 L143.1 25.9 L162.8 3.0 L182.3 26.2 L202.6 34.1 L242.6 18.1" fill="none" stroke="#72c463" stroke-width="1.7" stroke-linejoin="round"/></svg>
<div class="abs" style="left:441.4px;top:338px;width:1115.5px;height:263.5px;border:1px solid #e2e2e2;border-radius:6px;background:#fff"></div>
<svg class="abs" style="left:464px;top:348px" width="12" height="7" viewBox="0 0 12 7"><path d="M0.5 0.5 H11 L5.75 6.2Z" fill="#5b7192"/></svg>
<div class="t" style="left:498.40px;top:347.63px;font-size:9.6px;line-height:9.6px;color:#555;-webkit-text-stroke:0.42px #555;letter-spacing:0.021px;">INDICATOR</div>
<div class="t" style="left:792.00px;top:347.63px;font-size:9.6px;line-height:9.6px;color:#555;-webkit-text-stroke:0.42px #555;letter-spacing:-0.563px;">PERIOD</div>
<div class="t" style="left:1200.70px;top:347.63px;font-size:9.6px;line-height:9.6px;color:#555;-webkit-text-stroke:0.42px #555;letter-spacing:-0.674px;">CURRENT</div>
<div class="t" style="left:1332.00px;top:347.63px;font-size:9.6px;line-height:9.6px;color:#555;-webkit-text-stroke:0.42px #555;letter-spacing:-0.447px;">PREVIOUS</div>
<div class="t" style="left:1454.80px;top:347.63px;font-size:9.6px;line-height:9.6px;color:#555;-webkit-text-stroke:0.42px #555;letter-spacing:-0.578px;">CHANGE</div>
<div class="t" style="left:498.40px;top:371.35px;font-size:12.7px;line-height:12.7px;color:#333;-webkit-text-stroke:0.48px #333;letter-spacing:-0.237px;">Sales</div>
<div class="t" style="left:792px;top:371.35px;font-size:12.7px;line-height:12.7px;letter-spacing:0.392px"><span style="color:#2f5a9c;-webkit-text-stroke:0.43px #2f5a9c">This&nbsp;Month</span><span style="color:#333;-webkit-text-stroke:0.43px #333">&nbsp;vs.&nbsp;</span><span style="color:#2f5a9c;-webkit-text-stroke:0.43px #2f5a9c">Same&nbsp;Month&nbsp;Last&nbsp;FQtr&nbsp;to&nbsp;Date</span></div>
<div class="t" style="left:1200.70px;top:371.35px;font-size:12.7px;line-height:12.7px;color:#2f5a9c;-webkit-text-stroke:0.48px #2f5a9c;letter-spacing:-0.196px;">$1,692,424</div>
<div class="t" style="left:1332.00px;top:371.35px;font-size:12.7px;line-height:12.7px;color:#2f5a9c;-webkit-text-stroke:0.48px #2f5a9c;letter-spacing:-0.129px;">$1,148,838</div>
<div class="t" style="left:1478.00px;top:370.75px;font-size:12.7px;line-height:12.7px;color:#333;-webkit-text-stroke:0.48px #333;letter-spacing:-0.176px;">47.3%</div>
<svg class="abs" style="left:1462.5px;top:369.3px" width="12" height="14" viewBox="0 0 12 14"><path d="M5.5 13.5 V1.5 M1.2 6 L5.5 1.3 L9.8 6" fill="none" stroke="#76c267" stroke-width="1.6"/></svg>
<div class="t" style="left:498.40px;top:394.87px;font-size:12.7px;line-height:12.7px;color:#333;-webkit-text-stroke:0.48px #333;letter-spacing:0.180px;">New Leads</div>
<div class="t" style="left:792px;top:394.87px;font-size:12.7px;line-height:12.7px;letter-spacing:0.356px"><span style="color:#2f5a9c;-webkit-text-stroke:0.43px #2f5a9c">Today</span><span style="color:#333;-webkit-text-stroke:0.43px #333">&nbsp;vs.&nbsp;</span><span style="color:#2f5a9c;-webkit-text-stroke:0.43px #2f5a9c">Yesterday</span></div>
<div class="t" style="left:1200.70px;top:394.87px;font-size:12.7px;line-height:12.7px;color:#2f5a9c;-webkit-text-stroke:0.48px #2f5a9c;">3</div>
<div class="t" style="left:1332.00px;top:394.87px;font-size:12.7px;line-height:12.7px;color:#2f5a9c;-webkit-text-stroke:0.48px #2f5a9c;">1</div>
<div class="t" style="left:1478.00px;top:394.27px;font-size:12.7px;line-height:12.7px;color:#333;-webkit-text-stroke:0.48px #333;letter-spacing:-0.091px;">200.0%</div>
<svg class="abs" style="left:1462.5px;top:392.8px" width="12" height="14" viewBox="0 0 12 14"><path d="M5.5 13.5 V1.5 M1.2 6 L5.5 1.3 L9.8 6" fill="none" stroke="#76c267" stroke-width="1.6"/></svg>
<div class="t" style="left:498.40px;top:418.39px;font-size:12.7px;line-height:12.7px;color:#333;-webkit-text-stroke:0.48px #333;letter-spacing:0.220px;">New Customers</div>
<div class="t" style="left:792px;top:418.39px;font-size:12.7px;line-height:12.7px;letter-spacing:0.440px"><span style="color:#2f5a9c;-webkit-text-stroke:0.43px #2f5a9c">This&nbsp;Month</span><span style="color:#333;-webkit-text-stroke:0.43px #333">&nbsp;vs.&nbsp;</span><span style="color:#2f5a9c;-webkit-text-stroke:0.43px #2f5a9c">Last&nbsp;Month</span></div>
<div class="t" style="left:1200.70px;top:418.39px;font-size:12.7px;line-height:12.7px;color:#2f5a9c;-webkit-text-stroke:0.48px #2f5a9c;">2</div>
<div class="t" style="left:1332.00px;top:418.39px;font-size:12.7px;line-height:12.7px;color:#2f5a9c;-webkit-text-stroke:0.48px #2f5a9c;">1</div>
<div class="t" style="left:1478.00px;top:417.79px;font-size:12.7px;line-height:12.7px;color:#333;-webkit-text-stroke:0.48px #333;letter-spacing:-0.091px;">100.0%</div>
<svg class="abs" style="left:1462.5px;top:416.3px" width="12" height="14" viewBox="0 0 12 14"><path d="M5.5 13.5 V1.5 M1.2 6 L5.5 1.3 L9.8 6" fill="none" stroke="#76c267" stroke-width="1.6"/></svg>
<div class="t" style="left:498.40px;top:441.91px;font-size:12.7px;line-height:12.7px;color:#333;-webkit-text-stroke:0.48px #333;letter-spacing:0.126px;">Open Estimates</div>
<div class="t" style="left:792px;top:441.91px;font-size:12.7px;line-height:12.7px;letter-spacing:0.440px"><span style="color:#2f5a9c;-webkit-text-stroke:0.43px #2f5a9c">This&nbsp;Month</span><span style="color:#333;-webkit-text-stroke:0.43px #333">&nbsp;vs.&nbsp;</span><span style="color:#2f5a9c;-webkit-text-stroke:0.43px #2f5a9c">Last&nbsp;Month</span></div>
<div class="t" style="left:1200.70px;top:441.91px;font-size:12.7px;line-height:12.7px;color:#2f5a9c;-webkit-text-stroke:0.48px #2f5a9c;">4</div>
<div class="t" style="left:1332.00px;top:441.91px;font-size:12.7px;line-height:12.7px;color:#2f5a9c;-webkit-text-stroke:0.48px #2f5a9c;">3</div>
<div class="t" style="left:1478.00px;top:441.31px;font-size:12.7px;line-height:12.7px;color:#333;-webkit-text-stroke:0.48px #333;letter-spacing:-0.176px;">33.3%</div>
<svg class="abs" style="left:1462.5px;top:439.9px" width="12" height="14" viewBox="0 0 12 14"><path d="M5.5 13.5 V1.5 M1.2 6 L5.5 1.3 L9.8 6" fill="none" stroke="#76c267" stroke-width="1.6"/></svg>
<div class="t" style="left:498.40px;top:465.43px;font-size:12.7px;line-height:12.7px;color:#333;-webkit-text-stroke:0.48px #333;letter-spacing:0.451px;">Customer Returns by Value</div>
<div class="t" style="left:792px;top:465.43px;font-size:12.7px;line-height:12.7px;letter-spacing:0.440px"><span style="color:#2f5a9c;-webkit-text-stroke:0.43px #2f5a9c">This&nbsp;Month</span><span style="color:#333;-webkit-text-stroke:0.43px #333">&nbsp;vs.&nbsp;</span><span style="color:#2f5a9c;-webkit-text-stroke:0.43px #2f5a9c">Last&nbsp;Month</span></div>
<div class="t" style="left:1200.70px;top:465.43px;font-size:12.7px;line-height:12.7px;color:#2f5a9c;-webkit-text-stroke:0.48px #2f5a9c;letter-spacing:-0.797px;">$0</div>
<div class="t" style="left:1332.00px;top:465.43px;font-size:12.7px;line-height:12.7px;color:#2f5a9c;-webkit-text-stroke:0.48px #2f5a9c;letter-spacing:-0.797px;">$0</div>
<div class="t" style="left:1478.00px;top:464.83px;font-size:12.7px;line-height:12.7px;color:#333;-webkit-text-stroke:0.48px #333;letter-spacing:-0.319px;">0.0%</div>
<div class="t" style="left:498.40px;top:488.95px;font-size:12.7px;line-height:12.7px;color:#333;-webkit-text-stroke:0.48px #333;letter-spacing:0.371px;">Forecast</div>
<div class="t" style="left:792px;top:488.95px;font-size:12.7px;line-height:12.7px;letter-spacing:0.520px"><span style="color:#2f5a9c;-webkit-text-stroke:0.43px #2f5a9c">This&nbsp;Month</span></div>
<div class="t" style="left:1200.70px;top:488.95px;font-size:12.7px;line-height:12.7px;color:#2f5a9c;-webkit-text-stroke:0.48px #2f5a9c;letter-spacing:-0.161px;">$27,137,300</div>
<div class="t" style="left:498.40px;top:512.47px;font-size:12.7px;line-height:12.7px;color:#333;-webkit-text-stroke:0.48px #333;letter-spacing:0.410px;">Pipeline (Projected)</div>
<div class="t" style="left:792px;top:512.47px;font-size:12.7px;line-height:12.7px;letter-spacing:0.520px"><span style="color:#2f5a9c;-webkit-text-stroke:0.43px #2f5a9c">This&nbsp;Month</span></div>
<div class="t" style="left:1200.70px;top:512.47px;font-size:12.7px;line-height:12.7px;color:#2f5a9c;-webkit-text-stroke:0.48px #2f5a9c;letter-spacing:-0.194px;">$472,900</div>
<div class="t" style="left:498.40px;top:535.99px;font-size:12.7px;line-height:12.7px;color:#333;-webkit-text-stroke:0.48px #333;letter-spacing:0.410px;">Pipeline (Weighted)</div>
<div class="t" style="left:792px;top:535.99px;font-size:12.7px;line-height:12.7px;letter-spacing:0.520px"><span style="color:#2f5a9c;-webkit-text-stroke:0.43px #2f5a9c">This&nbsp;Month</span></div>
<div class="t" style="left:1200.70px;top:535.99px;font-size:12.7px;line-height:12.7px;color:#2f5a9c;-webkit-text-stroke:0.48px #2f5a9c;letter-spacing:-0.194px;">$150,180</div>
<div class="t" style="left:498.40px;top:559.51px;font-size:12.7px;line-height:12.7px;color:#333;-webkit-text-stroke:0.48px #333;letter-spacing:0.330px;">Pipeline Deals</div>
<div class="t" style="left:792px;top:559.51px;font-size:12.7px;line-height:12.7px;letter-spacing:0.520px"><span style="color:#2f5a9c;-webkit-text-stroke:0.43px #2f5a9c">This&nbsp;Month</span></div>
<div class="t" style="left:1200.70px;top:559.51px;font-size:12.7px;line-height:12.7px;color:#2f5a9c;-webkit-text-stroke:0.48px #2f5a9c;">9</div>
<div class="t" style="left:498.40px;top:583.03px;font-size:12.7px;line-height:12.7px;color:#333;-webkit-text-stroke:0.48px #333;letter-spacing:0.423px;">Total Pipeline Deals</div>
<div class="t" style="left:792px;top:583.03px;font-size:12.7px;line-height:12.7px;letter-spacing:0.775px"><span style="color:#2f5a9c;-webkit-text-stroke:0.43px #2f5a9c">Current</span></div>
<div class="t" style="left:1200.70px;top:583.03px;font-size:12.7px;line-height:12.7px;color:#2f5a9c;-webkit-text-stroke:0.48px #2f5a9c;letter-spacing:-0.797px;">25</div>
<div class="abs" style="left:425px;top:633px;width:1146.5px;height:494px;background:#fff;border-radius:4px;box-shadow:0 0 1.5px rgba(0,0,0,0.12)"></div><div class="abs" style="left:991.8px;top:639.0px;width:2px;height:2px;background:#e9ebee"></div><div class="abs" style="left:997.2px;top:639.0px;width:2px;height:2px;background:#e9ebee"></div><div class="abs" style="left:1002.8px;top:639.0px;width:2px;height:2px;background:#e9ebee"></div><div class="abs" style="left:991.8px;top:643.5px;width:2px;height:2px;background:#e9ebee"></div><div class="abs" style="left:997.2px;top:643.5px;width:2px;height:2px;background:#e9ebee"></div><div class="abs" style="left:1002.8px;top:643.5px;width:2px;height:2px;background:#e9ebee"></div>
<div class="t" style="left:441.20px;top:650.04px;font-size:15px;line-height:15px;color:#222;-webkit-text-stroke:0.55px #222;letter-spacing:0.521px;">Monthly Sales Trend</div>
<div class="abs" style="left:440.9px;top:683.2px;width:93.10000000000002px;height:23.799999999999955px;border:1px solid #c6c8cc;background:#fff"></div><div class="t" style="left:445.10px;top:689.30px;font-size:13px;line-height:13px;color:#333;letter-spacing:0.533px;-webkit-text-stroke:0.25px #333;">Monthly</div><svg class="abs" style="left:516.5px;top:691.8px" width="12" height="7" viewBox="0 0 12 7"><path d="M0.5 0.5 H11.5 L6 6.5Z" fill="#5b7192"/></svg>
<div class="abs" style="left:1356.7px;top:683.2px;width:125.6px;height:24px;border:1px solid #cfd1d4;border-radius:3px;background:#fff;overflow:hidden"><div class="abs" style="left:-1.0px;top:-1px;width:32.4px;height:24px;background:#1a6ff0"></div><div class="abs" style="left:30.4px;top:0;width:1px;height:22px;background:#d5d7da"></div><div class="abs" style="left:61.8px;top:0;width:1px;height:22px;background:#d5d7da"></div><div class="abs" style="left:93.2px;top:0;width:1px;height:22px;background:#d5d7da"></div></div><div class="abs" style="left:1356.7px;top:683.2px;width:125.6px;height:24px;overflow:hidden;border-radius:3px"><svg class="abs" style="left:0.0px;top:0px" width="32" height="25" viewBox="0 0 32 25"><path d="M0 25 V19 C3 14,6 6,11.5 6 C14 6,15 10,16.5 11.5 L20.5 10.5 C22.5 11.5,24 15,26.5 16.5 C28.5 17.5,30 18,32 18.5 V25Z" fill="#5a9af3"/><path d="M0 25 V22 C4 20,8 17,12 16.5 C17 16,24 19,32 21 V25Z" fill="#8ec0fa"/><path d="M3 24 C5 17,8 6,11.5 6 C14 6,15 10,16.5 13.5 C18 18,22 19,26 19 C28 19,30 20,32 21" fill="none" stroke="#cfe6ff" stroke-width="1.4"/></svg><svg class="abs" style="left:31.4px;top:0px" width="32" height="25" viewBox="0 0 32 25"><path d="M0.5 20.3 H3.2 L6 13.3 C8 7,9.5 6.3,11.2 6.3 C13 6.3,14 9,15.1 11.2 L20 20.3 L25.6 19.9 L31.5 21.7" fill="none" stroke="#9a9a9a" stroke-width="1.5"/></svg><svg class="abs" style="left:62.8px;top:0px" width="32" height="25" viewBox="0 0 32 25"><rect x="8" y="6.3" width="16.1" height="3.1" fill="#9a9a9a"/><rect x="8" y="12.2" width="10.8" height="2.5" fill="#9a9a9a"/><rect x="8" y="17.1" width="5.2" height="3.2" fill="#9a9a9a"/></svg><svg class="abs" style="left:94.2px;top:0px" width="32" height="25" viewBox="0 0 32 25"><rect x="9.6" y="6.3" width="3.9" height="14" fill="#9a9a9a"/><rect x="15.2" y="11.2" width="3.5" height="9.1" fill="#9a9a9a"/><rect x="20.5" y="16.1" width="3.5" height="4.2" fill="#9a9a9a"/></svg></div>
<div class="abs" style="left:1493px;top:683.2px;width:63.8px;height:24px;border:1px solid #cfd1d4;border-radius:3px;background:#fff;overflow:hidden"><div class="abs" style="left:-1px;top:-1px;width:32.9px;height:24px;background:#1a6ff0"></div></div>
<svg class="abs" style="left:1493px;top:683.2px" width="64" height="24" viewBox="0 0 64 24"><path d="M1 7 C8 3,13 6,17 11 C21 17,26 19,31.5 19" fill="none" stroke="#fff" stroke-width="2"/><path d="M33.5 11 C36 12.5,40 14.5,44 14.6 C47 14.7,51 15.4,54 15.3 C57 15,60 14.5,63.5 14.3" fill="none" stroke="#cfcfcf" stroke-width="1.3"/><path d="M33 7.6 C36 5.5,39 4.6,42 4.8 C46 5.3,49 8.5,51.5 11 C54 14,57 17.5,63.5 19.5" fill="none" stroke="#999" stroke-width="1.6"/></svg>
<div class="abs" style="left:506.4px;top:746.2px;width:1039.4px;height:1px;background:#dcdcdc"></div>
<div class="t" style="left:451.30px;top:743.23px;font-size:9.6px;line-height:9.6px;color:#444;letter-spacing:-0.322px;">4,000.00K</div>
<div class="abs" style="left:506.4px;top:824.9px;width:1039.4px;height:1px;background:#dcdcdc"></div>
<div class="t" style="left:451.30px;top:821.93px;font-size:9.6px;line-height:9.6px;color:#444;letter-spacing:-0.322px;">3,000.00K</div>
<div class="abs" style="left:506.4px;top:903.6px;width:1039.4px;height:1px;background:#dcdcdc"></div>
<div class="t" style="left:451.30px;top:900.63px;font-size:9.6px;line-height:9.6px;color:#444;letter-spacing:-0.322px;">2,000.00K</div>
<div class="abs" style="left:506.4px;top:982.3px;width:1039.4px;height:1px;background:#dcdcdc"></div>
<div class="t" style="left:451.30px;top:979.33px;font-size:9.6px;line-height:9.6px;color:#444;letter-spacing:-0.322px;">1,000.00K</div>
<div class="t" style="left:468.70px;top:1057.13px;font-size:9.6px;line-height:9.6px;color:#444;letter-spacing:-0.326px;">0.00K</div>
<svg class="abs" style="left:500px;top:740px" width="1060" height="330" viewBox="0 0 1060 330">
<defs><linearGradient id="tr" x1="0" y1="33.700000000000045" x2="0" y2="321.5" gradientUnits="userSpaceOnUse"><stop offset="0" stop-color="#74a8f4"/><stop offset="1" stop-color="#4f7cc0"/></linearGradient></defs>
<path d="M16.0 257.5 L101.2 274.0 L180.8 256.6 L266.0 273.4 L348.4 272.5 L433.6 272.0 L516.0 184.0 L601.2 166.0 L686.3 226.0 L768.8 33.7 L853.9 184.0 L936.3 216.9 L1021.5 187.9 L1021.5 321.5 L16.0 321.5Z" fill="url(#tr)"/>
<path d="M16.0 265.5 C22.7 265.4,42.0 265.0,56.0 264.7 C70.0 264.5,86.0 264.0,100.0 264.0 C114.0 264.0,123.3 264.1,140.0 264.5 C156.7 264.9,181.6 265.8,200.0 266.5 C218.4 267.2,234.4 268.2,250.6 268.5 C266.8 268.8,282.0 268.9,297.0 268.5 C312.0 268.1,326.0 268.1,340.5 266.0 C355.0 263.9,367.1 259.8,384.0 256.0 C400.9 252.2,422.7 247.2,442.0 243.0 C461.3 238.8,480.7 234.8,500.0 230.5 C519.3 226.2,541.1 221.6,558.0 216.9 C574.9 212.2,589.4 207.0,601.5 202.4 C613.6 197.8,616.0 195.9,630.5 189.3 C645.0 182.7,671.6 168.6,688.5 162.6 C705.4 156.7,719.9 155.2,732.0 153.6 C744.1 152.0,748.9 152.4,761.0 153.0 C773.1 153.6,790.0 156.0,804.5 157.4 C819.0 158.8,831.1 160.6,848.0 161.2 C864.9 161.8,891.5 160.5,906.0 160.9 C920.5 161.3,922.9 161.2,935.0 163.8 C947.1 166.4,964.5 171.1,978.5 176.3 C992.5 181.5,1009.6 191.6,1019.0 195.0 C1028.4 198.4,1032.3 196.2,1035.0 196.5" fill="none" stroke="#4a80d8" stroke-width="1.5" stroke-dasharray="6 4"/>
<path d="M16.0 257.5 L101.2 274.0 L180.8 256.6 L266.0 273.4 L348.4 272.5 L433.6 272.0 L516.0 184.0 L601.2 166.0 L686.3 226.0 L768.8 33.7 L853.9 184.0 L936.3 216.9 L1021.5 187.9" fill="none" stroke="#2262c6" stroke-width="2.3" stroke-linejoin="miter"/>
<line x1="6.399999999999977" y1="6.7" x2="1045.8" y2="6.7" stroke="#000" stroke-opacity="0.07" stroke-width="1"/><line x1="6.399999999999977" y1="85.4" x2="1045.8" y2="85.4" stroke="#000" stroke-opacity="0.07" stroke-width="1"/><line x1="6.399999999999977" y1="164.1" x2="1045.8" y2="164.1" stroke="#000" stroke-opacity="0.07" stroke-width="1"/><line x1="6.399999999999977" y1="242.8" x2="1045.8" y2="242.8" stroke="#000" stroke-opacity="0.07" stroke-width="1"/>
<line x1="6.399999999999977" y1="321.5" x2="1045.8" y2="321.5" stroke="#555" stroke-width="2"/>
<circle cx="768.8" cy="33.7" r="3.6" fill="#e8e8e8" stroke="#222" stroke-width="1.8"/>
</svg>
<div class="t" style="left:500.98px;top:1066.33px;font-size:9.6px;line-height:9.6px;color:#444;letter-spacing:-0.105px;">Jan '24</div>
<div class="t" style="left:585.62px;top:1066.33px;font-size:9.6px;line-height:9.6px;color:#1f2fbf;font-weight:bold;letter-spacing:-0.267px;text-decoration:underline;">Feb '24</div>
<div class="t" style="left:665.30px;top:1066.33px;font-size:9.6px;line-height:9.6px;color:#444;letter-spacing:-0.108px;">Mar '24</div>
<div class="t" style="left:751.24px;top:1066.33px;font-size:9.6px;line-height:9.6px;color:#444;letter-spacing:-0.097px;">Apr '24</div>
<div class="t" style="left:832.10px;top:1066.33px;font-size:9.6px;line-height:9.6px;color:#444;letter-spacing:-0.111px;">May '24</div>
<div class="t" style="left:918.56px;top:1066.33px;font-size:9.6px;line-height:9.6px;color:#444;letter-spacing:-0.105px;">Jun '24</div>
<div class="t" style="left:1002.55px;top:1066.33px;font-size:9.6px;line-height:9.6px;color:#444;letter-spacing:-0.092px;">Jul '24</div>
<div class="t" style="left:1085.36px;top:1066.33px;font-size:9.6px;line-height:9.6px;color:#444;letter-spacing:-0.107px;">Aug '24</div>
<div class="t" style="left:1170.53px;top:1066.33px;font-size:9.6px;line-height:9.6px;color:#444;letter-spacing:-0.107px;">Sep '24</div>
<div class="t" style="left:1254.00px;top:1066.33px;font-size:9.6px;line-height:9.6px;color:#444;letter-spacing:-0.098px;">Oct '24</div>
<div class="t" style="left:1338.11px;top:1066.33px;font-size:9.6px;line-height:9.6px;color:#444;letter-spacing:-0.108px;">Nov '24</div>
<div class="t" style="left:1420.53px;top:1066.33px;font-size:9.6px;line-height:9.6px;color:#444;letter-spacing:-0.108px;">Dec '24</div>
<div class="t" style="left:1506.48px;top:1066.33px;font-size:9.6px;line-height:9.6px;color:#444;letter-spacing:-0.105px;">Jan '25</div>
<div class="abs" style="left:921px;top:1096px;width:10px;height:10px;border-radius:50%;background:radial-gradient(circle at 40% 35%,#5a92ea,#2a63c4)"></div>
<div class="t" style="left:940.60px;top:1096.49px;font-size:10px;line-height:10px;color:#555;letter-spacing:-0.150px;">Sales</div>
<svg class="abs" style="left:983px;top:1098px" width="18" height="6"><path d="M1 3 H6 M9 3 H14" stroke="#4a80d8" stroke-width="1.5"/></svg>
<div class="t" style="left:1005.80px;top:1096.49px;font-size:10px;line-height:10px;color:#555;letter-spacing:0.073px;">Moving Average</div>
<div class="abs" style="left:1586.5px;top:160px;width:371.0px;height:278.3px;background:#fff;border-radius:4px;box-shadow:0 0 1.5px rgba(0,0,0,0.12)"></div><div class="abs" style="left:1765.5px;top:166.0px;width:2px;height:2px;background:#e9ebee"></div><div class="abs" style="left:1771.0px;top:166.0px;width:2px;height:2px;background:#e9ebee"></div><div class="abs" style="left:1776.5px;top:166.0px;width:2px;height:2px;background:#e9ebee"></div><div class="abs" style="left:1765.5px;top:170.5px;width:2px;height:2px;background:#e9ebee"></div><div class="abs" style="left:1771.0px;top:170.5px;width:2px;height:2px;background:#e9ebee"></div><div class="abs" style="left:1776.5px;top:170.5px;width:2px;height:2px;background:#e9ebee"></div>
<div class="t" style="left:1602.10px;top:177.74px;font-size:15px;line-height:15px;color:#222;-webkit-text-stroke:0.55px #222;letter-spacing:0.316px;">KPI Meter</div>
<div class="abs" style="left:1602.1px;top:209.8px;width:341.4000000000001px;height:23.299999999999983px;border:1px solid #c6c8cc;background:#fff"></div><div class="t" style="left:1606.30px;top:215.65px;font-size:13px;line-height:13px;color:#333;letter-spacing:-0.675px;-webkit-text-stroke:0.25px #333;">Sales</div><svg class="abs" style="left:1926.0px;top:218.1px" width="12" height="7" viewBox="0 0 12 7"><path d="M0.5 0.5 H11.5 L6 6.5Z" fill="#5b7192"/></svg>
<svg class="abs" style="left:1660.4px;top:275.5px" width="223.4" height="113.7" viewBox="0 0 223.4 113.7"><defs><linearGradient id="ga1" x1="0" y1="0" x2="1" y2="0"><stop offset="0" stop-color="#479a4c"/><stop offset="1" stop-color="#86c67e"/></linearGradient></defs><path d="M2.00 111.70 A109.7 109.7 0 0 1 221.40 111.70 L208.50 111.70 A96.8 96.8 0 0 0 14.90 111.70Z" fill="#e5e8ed"/><path d="M2.00 111.70 A109.7 109.7 0 0 1 221.25 106.05 L208.37 106.71 A96.8 96.8 0 0 0 14.90 111.70Z" fill="url(#ga1)"/></svg>
<svg class="abs" style="left:1760px;top:280px" width="80" height="40" viewBox="0 0 80 40"><line x1="57.3" y1="28.8" x2="70.4" y2="7" stroke="#3a3a3a" stroke-width="1.5"/></svg>
<div class="t" style="left:1823.80px;top:269.31px;font-size:11px;line-height:11px;color:#333;letter-spacing:-0.092px;">1.1M</div>
<div class="t" style="left:1729.60px;top:342.48px;font-size:30px;line-height:30px;color:#1a1a1a;letter-spacing:0.575px;">$1.7M</div>
<div class="t" style="left:1758.00px;top:380.08px;font-size:9.3px;line-height:9.3px;color:#444;letter-spacing:-0.248px;">SALES</div>
<div class="t" style="left:1665.70px;top:390.98px;font-size:10.5px;line-height:10.5px;color:#333;">0</div>
<div class="t" style="left:1864.70px;top:390.98px;font-size:10.5px;line-height:10.5px;color:#333;letter-spacing:-0.321px;">1.7M</div>
<div class="abs" style="left:1586.5px;top:453.8px;width:371.0px;height:276.8px;background:#fff;border-radius:4px;box-shadow:0 0 1.5px rgba(0,0,0,0.12)"></div><div class="abs" style="left:1765.5px;top:459.8px;width:2px;height:2px;background:#e9ebee"></div><div class="abs" style="left:1771.0px;top:459.8px;width:2px;height:2px;background:#e9ebee"></div><div class="abs" style="left:1776.5px;top:459.8px;width:2px;height:2px;background:#e9ebee"></div><div class="abs" style="left:1765.5px;top:464.3px;width:2px;height:2px;background:#e9ebee"></div><div class="abs" style="left:1771.0px;top:464.3px;width:2px;height:2px;background:#e9ebee"></div><div class="abs" style="left:1776.5px;top:464.3px;width:2px;height:2px;background:#e9ebee"></div>
<div class="t" style="left:1602.10px;top:470.34px;font-size:15px;line-height:15px;color:#222;-webkit-text-stroke:0.55px #222;letter-spacing:0.316px;">KPI Meter</div>
<div class="abs" style="left:1602.1px;top:503.6px;width:341.4000000000001px;height:23.399999999999977px;border:1px solid #c6c8cc;background:#fff"></div><div class="t" style="left:1606.30px;top:509.50px;font-size:13px;line-height:13px;color:#333;letter-spacing:-0.232px;-webkit-text-stroke:0.25px #333;">New Business</div><svg class="abs" style="left:1926.0px;top:512.0px" width="12" height="7" viewBox="0 0 12 7"><path d="M0.5 0.5 H11.5 L6 6.5Z" fill="#5b7192"/></svg>
<svg class="abs" style="left:1660.3px;top:569.8px" width="223.6" height="113.8" viewBox="0 0 223.6 113.8"><defs><linearGradient id="ga2" x1="0" y1="0" x2="1" y2="0"><stop offset="0" stop-color="#4a9a4d"/><stop offset="1" stop-color="#70b669"/></linearGradient></defs><path d="M2.00 111.80 A109.8 109.8 0 0 1 221.60 111.80 L208.30 111.80 A96.5 96.5 0 0 0 15.30 111.80Z" fill="#e5e8ed"/><path d="M2.00 111.80 A109.8 109.8 0 0 1 111.80 2.00 L111.80 15.30 A96.5 96.5 0 0 0 15.30 111.80Z" fill="url(#ga2)"/></svg>
<div class="t" style="left:1716.20px;top:635.82px;font-size:29px;line-height:29px;color:#1a1a1a;letter-spacing:0.962px;">$199.0K</div>
<div class="t" style="left:1735.90px;top:673.68px;font-size:9.3px;line-height:9.3px;color:#444;letter-spacing:0.252px;">NEW BUSINESS</div>
<div class="t" style="left:1665.70px;top:684.98px;font-size:10.5px;line-height:10.5px;color:#333;">0</div>
<div class="t" style="left:1859.80px;top:684.98px;font-size:10.5px;line-height:10.5px;color:#333;letter-spacing:-0.217px;">397.9K</div>
<div class="abs" style="left:1586.5px;top:747.7px;width:371.0px;height:412.29999999999995px;background:#fff;border-radius:4px;box-shadow:0 0 1.5px rgba(0,0,0,0.12)"></div><div class="abs" style="left:1765.5px;top:753.7px;width:2px;height:2px;background:#e9ebee"></div><div class="abs" style="left:1771.0px;top:753.7px;width:2px;height:2px;background:#e9ebee"></div><div class="abs" style="left:1776.5px;top:753.7px;width:2px;height:2px;background:#e9ebee"></div><div class="abs" style="left:1765.5px;top:758.2px;width:2px;height:2px;background:#e9ebee"></div><div class="abs" style="left:1771.0px;top:758.2px;width:2px;height:2px;background:#e9ebee"></div><div class="abs" style="left:1776.5px;top:758.2px;width:2px;height:2px;background:#e9ebee"></div>
<div class="t" style="left:1602.00px;top:763.94px;font-size:15px;line-height:15px;color:#222;-webkit-text-stroke:0.55px #222;letter-spacing:0.406px;">Top 10 Customers By Balance</div>
<div class="abs" style="left:1602px;top:796.7px;width:341.70000000000005px;height:24.399999999999977px;border:1px solid #c6c8cc;background:#fff"></div><div class="t" style="left:1606.20px;top:803.10px;font-size:13px;line-height:13px;color:#333;letter-spacing:0.147px;-webkit-text-stroke:0.25px #333;">end of this week</div><svg class="abs" style="left:1926.2px;top:805.6px" width="12" height="7" viewBox="0 0 12 7"><path d="M0.5 0.5 H11.5 L6 6.5Z" fill="#5b7192"/></svg>
<div class="abs" style="left:1602px;top:828.8px;width:125.6px;height:24.2px;border:1px solid #cfd1d4;border-radius:3px;background:#fff;overflow:hidden"><div class="abs" style="left:30.4px;top:0;width:1px;height:22.2px;background:#d5d7da"></div><div class="abs" style="left:61.8px;top:0;width:1px;height:22.2px;background:#d5d7da"></div><div class="abs" style="left:93.2px;top:-1px;width:32.4px;height:24.2px;background:#1a6ff0"></div><div class="abs" style="left:93.2px;top:0;width:1px;height:22.2px;background:#d5d7da"></div></div><div class="abs" style="left:1602px;top:828.8px;width:125.6px;height:24.2px;overflow:hidden;border-radius:3px"><svg class="abs" style="left:0.0px;top:0px" width="32" height="25" viewBox="0 0 32 25"><path d="M0.5 20.3 H3.2 L6 13.3 C8 7,9.5 6.3,11.2 6.3 C13 6.3,14 9,15.1 11.2 L20 20.3 L25.6 19.9 L31.5 21.7" fill="none" stroke="#9a9a9a" stroke-width="1.5"/></svg><svg class="abs" style="left:31.4px;top:0px" width="32" height="25" viewBox="0 0 32 25"><rect x="8" y="6.3" width="16.1" height="3.1" fill="#9a9a9a"/><rect x="8" y="12.2" width="10.8" height="2.5" fill="#9a9a9a"/><rect x="8" y="17.1" width="5.2" height="3.2" fill="#9a9a9a"/></svg><svg class="abs" style="left:62.8px;top:0px" width="32" height="25" viewBox="0 0 32 25"><rect x="9.6" y="6.3" width="3.9" height="14" fill="#9a9a9a"/><rect x="15.2" y="11.2" width="3.5" height="9.1" fill="#9a9a9a"/><rect x="20.5" y="16.1" width="3.5" height="4.2" fill="#9a9a9a"/></svg><svg class="abs" style="left:94.2px;top:0px" width="32" height="25" viewBox="0 0 32 25"><circle cx="16.2" cy="12.9" r="7.9" fill="#fff"/><path d="M16.2 12.9 H8.3 A7.9 7.9 0 0 1 16.2 5Z" fill="#9cc3f4"/></svg></div>
<svg class="abs" style="left:1642.00px;top:886.70px" width="260" height="260" viewBox="0 0 260 260"><defs><linearGradient id="g1772_1016_0" x1="0" y1="0" x2="0" y2="1"><stop offset="0" stop-color="#4392f4"/><stop offset="1" stop-color="#2a5fb5"/></linearGradient><linearGradient id="g1772_1016_1" x1="0" y1="0" x2="0" y2="1"><stop offset="0" stop-color="#e6d64e"/><stop offset="1" stop-color="#e4d43a"/></linearGradient><linearGradient id="g1772_1016_2" x1="0" y1="0" x2="0" y2="1"><stop offset="0" stop-color="#ff9a40"/><stop offset="1" stop-color="#ff8a2a"/></linearGradient><linearGradient id="g1772_1016_3" x1="0" y1="0" x2="0" y2="1"><stop offset="0" stop-color="#8e8cf2"/><stop offset="1" stop-color="#8079ee"/></linearGradient><linearGradient id="g1772_1016_4" x1="0" y1="0" x2="0" y2="1"><stop offset="0" stop-color="#64c74a"/><stop offset="1" stop-color="#4fbb34"/></linearGradient><linearGradient id="g1772_1016_5" x1="0" y1="0" x2="0" y2="1"><stop offset="0" stop-color="#6496f5"/><stop offset="1" stop-color="#4f80ef"/></linearGradient><linearGradient id="g1772_1016_6" x1="0" y1="0" x2="0" y2="1"><stop offset="0" stop-color="#e574a6"/><stop offset="1" stop-color="#dc5b93"/></linearGradient><linearGradient id="g1772_1016_7" x1="0" y1="0" x2="0" y2="1"><stop offset="0" stop-color="#67b6d8"/><stop offset="1" stop-color="#50a2c8"/></linearGradient><linearGradient id="g1772_1016_8" x1="0" y1="0" x2="0" y2="1"><stop offset="0" stop-color="#b25cbc"/><stop offset="1" stop-color="#9a48aa"/></linearGradient><linearGradient id="g1772_1016_9" x1="0" y1="0" x2="0" y2="1"><stop offset="0" stop-color="#5f78bf"/><stop offset="1" stop-color="#4e66ae"/></linearGradient></defs><path d="M130.00 2.00 A128 128 0 0 1 253.04 165.28 L229.01 158.39 A103 103 0 0 0 130.00 27.00Z" fill="url(#g1772_1016_0)" stroke="#fff" stroke-width="1.6" stroke-linejoin="miter"/><path d="M253.04 165.28 A128 128 0 0 1 148.70 256.63 L145.05 231.90 A103 103 0 0 0 229.01 158.39Z" fill="url(#g1772_1016_1)" stroke="#fff" stroke-width="1.6" stroke-linejoin="miter"/><path d="M148.70 256.63 A128 128 0 0 1 26.58 205.42 L46.78 190.69 A103 103 0 0 0 145.05 231.90Z" fill="url(#g1772_1016_2)" stroke="#fff" stroke-width="1.6" stroke-linejoin="miter"/><path d="M26.58 205.42 A128 128 0 0 1 2.39 140.04 L27.32 138.08 A103 103 0 0 0 46.78 190.69Z" fill="url(#g1772_1016_3)" stroke="#fff" stroke-width="1.6" stroke-linejoin="miter"/><path d="M2.39 140.04 A128 128 0 0 1 11.07 82.67 L34.30 91.92 A103 103 0 0 0 27.32 138.08Z" fill="url(#g1772_1016_4)" stroke="#fff" stroke-width="1.6" stroke-linejoin="miter"/><path d="M11.07 82.67 A128 128 0 0 1 32.23 47.38 L51.33 63.52 A103 103 0 0 0 34.30 91.92Z" fill="url(#g1772_1016_5)" stroke="#fff" stroke-width="1.6" stroke-linejoin="miter"/><path d="M32.23 47.38 A128 128 0 0 1 52.61 28.04 L67.73 47.96 A103 103 0 0 0 51.33 63.52Z" fill="url(#g1772_1016_6)" stroke="#fff" stroke-width="1.6" stroke-linejoin="miter"/><path d="M52.61 28.04 A128 128 0 0 1 78.35 12.89 L88.43 35.76 A103 103 0 0 0 67.73 47.96Z" fill="url(#g1772_1016_7)" stroke="#fff" stroke-width="1.6" stroke-linejoin="miter"/><path d="M78.35 12.89 A128 128 0 0 1 104.92 4.48 L109.82 29.00 A103 103 0 0 0 88.43 35.76Z" fill="url(#g1772_1016_8)" stroke="#fff" stroke-width="1.6" stroke-linejoin="miter"/><path d="M104.92 4.48 A128 128 0 0 1 130.00 2.00 L130.00 27.00 A103 103 0 0 0 109.82 29.00Z" fill="url(#g1772_1016_9)" stroke="#fff" stroke-width="1.6" stroke-linejoin="miter"/></svg>
<div class="abs" style="left:1942.6px;top:710.8px;width:34px;height:66.5px;border-radius:17px;background:#2f556f;box-shadow:0 1px 3px rgba(0,0,0,0.35)"></div>
<svg class="abs" style="left:1947px;top:715px" width="26" height="60" viewBox="0 0 26 60"><circle cx="12.5" cy="12" r="10.2" fill="none" stroke="#cfe6f2" stroke-width="1.6"/><path d="M12.9 9.6 L11 16.3" stroke="#e6f2f8" stroke-width="2.2" stroke-linecap="round"/><circle cx="13.9" cy="6.4" r="1.2" fill="#e6f2f8"/><circle cx="6.5" cy="35.0" r="2.1" fill="#7a98aa"/><circle cx="13.0" cy="35.0" r="2.1" fill="#7a98aa"/><circle cx="19.5" cy="35.0" r="2.1" fill="#7a98aa"/><circle cx="6.5" cy="41.9" r="2.1" fill="#7a98aa"/><circle cx="13.0" cy="41.9" r="2.1" fill="#7a98aa"/><circle cx="19.5" cy="41.9" r="2.1" fill="#7a98aa"/><circle cx="6.5" cy="48.8" r="2.1" fill="#7a98aa"/><circle cx="13.0" cy="48.8" r="2.1" fill="#7a98aa"/><circle cx="19.5" cy="48.8" r="2.1" fill="#7a98aa"/></svg>
<div class="abs" style="left:1984.4px;top:120px;width:13.2px;height:310px;background:#a9a9a9"></div>
<svg class="abs" style="left:1985px;top:108px" width="12" height="8" viewBox="0 0 12 8"><path d="M1.5 6.5 L5.8 1.5 L10 6.5Z" fill="#a0a0a0"/></svg>
<svg class="abs" style="left:1985px;top:1125px" width="12" height="8" viewBox="0 0 12 8"><path d="M1.5 1.3 H10.3 L5.9 6.5Z" fill="#444"/></svg>
</div>
</body></html>
